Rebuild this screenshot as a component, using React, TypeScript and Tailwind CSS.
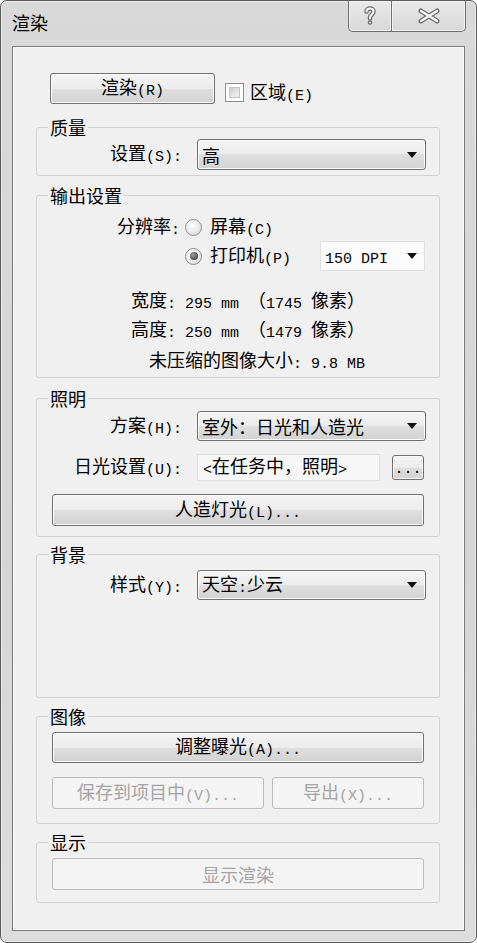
import React from "react";

const CJK = "font-['Noto_Sans_CJK_SC',sans-serif]";

function T({ s }: { s: string }) {
  const parts = s.split(/([\x20-\x7e]+)/);
  return (
    <>
      {parts.map((p, i) =>
        p === "" ? null : /^[\x20-\x7e]+$/.test(p) ? (
          <span key={i} className="relative top-[1px] font-['Liberation_Mono',monospace] text-[15px] whitespace-pre">
            {p}
          </span>
        ) : (
          <span key={i}>{p}</span>
        )
      )}
    </>
  );
}

function Btn({ label, className, disabled }: { label: string; className: string; disabled?: boolean }) {
  return (
    <div
      className={`flex items-center justify-center rounded-[3px] border ${
        disabled
          ? "border-[#bcbcbc] bg-[#f4f4f4] text-[#a4a4a4]"
          : "border-[#707070] bg-[linear-gradient(#f4f4f4,#ececec_50%,#dfdfdf_50%,#d2d2d2)] text-black shadow-[inset_0_0_0_1px_#fbfbfb]"
      } ${className}`}
    >
      <span>
        <T s={label} />
      </span>
    </div>
  );
}

function Arrow() {
  return (
    <svg width="10" height="6" viewBox="0 0 10 6">
      <path d="M0 0H10L5 6Z" fill="#111" />
    </svg>
  );
}

function Select({ text, className }: { text: string; className: string }) {
  return (
    <div
      className={`flex items-center justify-between rounded-[3px] border border-[#707070] bg-[linear-gradient(#f4f4f4,#ececec_50%,#dfdfdf_50%,#d2d2d2)] shadow-[inset_0_0_0_1px_#fbfbfb] pl-[4px] pr-[8px] ${className}`}
    >
      <span>
        <T s={text} />
      </span>
      <Arrow />
    </div>
  );
}

function Radio({ on }: { on?: boolean }) {
  return (
    <div className="w-[17px] h-[17px] rounded-full border border-[#8c8c8c] bg-[radial-gradient(circle_at_40%_35%,#ffffff,#d4d4d4)] flex items-center justify-center shrink-0">
      {on && <div className="w-[8px] h-[8px] rounded-full bg-[radial-gradient(circle_at_40%_35%,#a0a0a0,#262626)]" />}
    </div>
  );
}

function Label({ s }: { s: string }) {
  return (
    <div className="w-[145px] text-right shrink-0">
      <T s={s} />
    </div>
  );
}

export default function App() {
  return (
    <div className={`w-[477px] h-[943px] bg-white text-[18px] leading-[22px] text-black ${CJK}`}>
      <div className="h-full flex flex-col rounded-[7px] border border-[#5a5a5a] bg-[linear-gradient(#d9d9d9,#d5d5d5_60%,#dddddd)] shadow-[inset_0_0_0_1px_#ededed]">
        {/* Title bar */}
        <div className="h-[45px] flex justify-between items-start shrink-0">
          <div className="pl-[11px] pt-[10px]">渲染</div>
          <div className="mr-[10px] flex">
            <div className="w-[44px] h-[31px] flex items-center justify-center border border-t-0 border-[#6e6e6e] rounded-bl-[5px] bg-[linear-gradient(#e9e9e9,#d8d8d8)] shadow-[inset_0_0_0_1px_#f2f2f2]">
              <svg width="14" height="20" viewBox="0 0 14 20">
                <g fill="none" strokeLinecap="round">
                  <path d="M3.5 5.5C3.5 1.5 10.5 1.5 10.5 5.5C10.5 8.5 7 8.5 7 11.5V12.5" stroke="#6a6a6a" strokeWidth="4.5" />
                  <path d="M7 16.5V16.6" stroke="#6a6a6a" strokeWidth="4.5" />
                  <path d="M3.5 5.5C3.5 1.5 10.5 1.5 10.5 5.5C10.5 8.5 7 8.5 7 11.5V12.5" stroke="#fafafa" strokeWidth="2" />
                  <path d="M7 16.5V16.6" stroke="#fafafa" strokeWidth="2" />
                </g>
              </svg>
            </div>
            <div className="w-[74px] h-[31px] flex items-center justify-center border border-t-0 border-l-0 border-[#6e6e6e] rounded-br-[5px] bg-[linear-gradient(#e9e9e9,#d8d8d8)] shadow-[inset_0_0_0_1px_#f2f2f2]">
              <svg width="22" height="16" viewBox="0 0 22 16">
                <g fill="none" strokeLinecap="round">
                  <path d="M3 3L19 13M19 3L3 13" stroke="#6a6a6a" strokeWidth="5" />
                  <path d="M3 3L19 13M19 3L3 13" stroke="#fafafa" strokeWidth="2.4" />
                </g>
              </svg>
            </div>
          </div>
        </div>

        {/* Client */}
        <div className="flex-1 mx-[11px] mb-[11px] border border-[#7a7a7a] bg-[#f0f0f0] shadow-[inset_0_0_0_1px_#fbfbfb] pt-[26px]">
          <div className="flex items-start pl-[37px]">
            <Btn label="渲染(R)" className="w-[165px] h-[31px]" />
            <div className="ml-[10px] mt-[10px] w-[19px] h-[19px] border border-[#8e8e8e] bg-white p-[3px]">
              <div className="w-full h-full bg-[linear-gradient(135deg,#cfcfcf,#f4f4f4)] border border-[#c4c4c4]" />
            </div>
            <div className="ml-[6px] mt-[7px]">
              <T s="区域(E)" />
            </div>
          </div>

          <div className="ml-[23px] w-[404px]">
            {/* 质量 */}
            <fieldset className="mt-[9px] border border-[#d2d2d2] rounded-[3px] pb-[5px]">
              <legend className="ml-[11px] px-[2px]">质量</legend>
              <div className="mt-[1px] flex items-center">
                <Label s="设置(S):" />
                <Select text="高" className="ml-[15px] w-[229px] h-[31px]" />
              </div>
            </fieldset>

            {/* 输出设置 */}
            <fieldset className="mt-[8px] border border-[#d2d2d2] rounded-[3px] pb-[6px]">
              <legend className="ml-[11px] px-[2px]">输出设置</legend>
              <div className="mt-[9px] h-[24px] flex items-center">
                <div className="w-[143px] text-right shrink-0">
                  <T s="分辨率:" />
                </div>
                <div className="ml-[5px]">
                  <Radio />
                </div>
                <div className="ml-[8px]">
                  <T s="屏幕(C)" />
                </div>
              </div>
              <div className="mt-[2px] h-[30px] flex items-center">
                <div className="w-[148px] shrink-0" />
                <Radio on />
                <div className="ml-[8px]">
                  <T s="打印机(P)" />
                </div>
                <div className="ml-auto mr-[14px] w-[105px] h-[30px] flex items-center justify-between border border-[#e0e0e0] bg-[#fcfcfc] pl-[4px] pr-[7px]">
                  <span>
                    <T s="150 DPI" />
                  </span>
                  <Arrow />
                </div>
              </div>
              <div className="mt-[16px] h-[24px] leading-[24px] text-right pr-[74px]">
                <T s="宽度: 295 mm （1745 像素）" />
              </div>
              <div className="mt-[5px] h-[24px] leading-[24px] text-right pr-[74px]">
                <T s="高度: 250 mm （1479 像素）" />
              </div>
              <div className="mt-[7px] h-[24px] leading-[24px] text-right pr-[74px]">
                <T s="未压缩的图像大小: 9.8 MB" />
              </div>
            </fieldset>

            {/* 照明 */}
            <fieldset className="mt-[9px] border border-[#d2d2d2] rounded-[3px] pb-[10px]">
              <legend className="ml-[11px] px-[2px]">照明</legend>
              <div className="mt-[2px] flex items-center">
                <Label s="方案(H):" />
                <Select text="室外：日光和人造光" className="ml-[15px] w-[229px] h-[30px]" />
              </div>
              <div className="mt-[13px] h-[27px] flex items-center">
                <Label s="日光设置(U):" />
                <div className="ml-[15px] w-[183px] h-[27px] flex items-center border border-[#dedede] bg-[#f7f7f7] pl-[5px]">
                  <span>
                    <T s="<在任务中，照明>" />
                  </span>
                </div>
                <div className="ml-[12px] w-[32px] h-[25px] flex items-end justify-center rounded-[3px] border border-[#707070] bg-[linear-gradient(#f4f4f4,#ececec_50%,#dfdfdf_50%,#d2d2d2)] shadow-[inset_0_0_0_1px_#fbfbfb] leading-[18px]">
                  <span className="font-['Liberation_Mono',monospace] text-[15px]">...</span>
                </div>
              </div>
              <Btn label="人造灯光(L)..." className="mt-[13px] ml-[15px] w-[372px] h-[32px]" />
            </fieldset>

            {/* 背景 */}
            <fieldset className="mt-[6px] border border-[#d2d2d2] rounded-[3px] pb-[97px]">
              <legend className="ml-[11px] px-[2px]">背景</legend>
              <div className="mt-[5px] flex items-center">
                <Label s="样式(Y):" />
                <Select text="天空:少云" className="ml-[15px] w-[229px] h-[30px]" />
              </div>
            </fieldset>

            {/* 图像 */}
            <fieldset className="mt-[7px] border border-[#d2d2d2] rounded-[3px] pb-[14px]">
              <legend className="ml-[11px] px-[2px]">图像</legend>
              <Btn label="调整曝光(A)..." className="mt-[5px] ml-[15px] w-[372px] h-[31px]" />
              <div className="mt-[14px] ml-[15px] flex gap-[8px]">
                <Btn label="保存到项目中(V)..." className="w-[212px] h-[32px]" disabled />
                <Btn label="导出(X)..." className="w-[152px] h-[32px]" disabled />
              </div>
            </fieldset>

            {/* 显示 */}
            <fieldset className="mt-[7px] border border-[#d2d2d2] rounded-[3px] pb-[12px]">
              <legend className="ml-[11px] px-[2px]">显示</legend>
              <Btn label="显示渲染" className="mt-[5px] ml-[15px] w-[372px] h-[32px]" disabled />
            </fieldset>
          </div>
        </div>
      </div>
    </div>
  );
}
